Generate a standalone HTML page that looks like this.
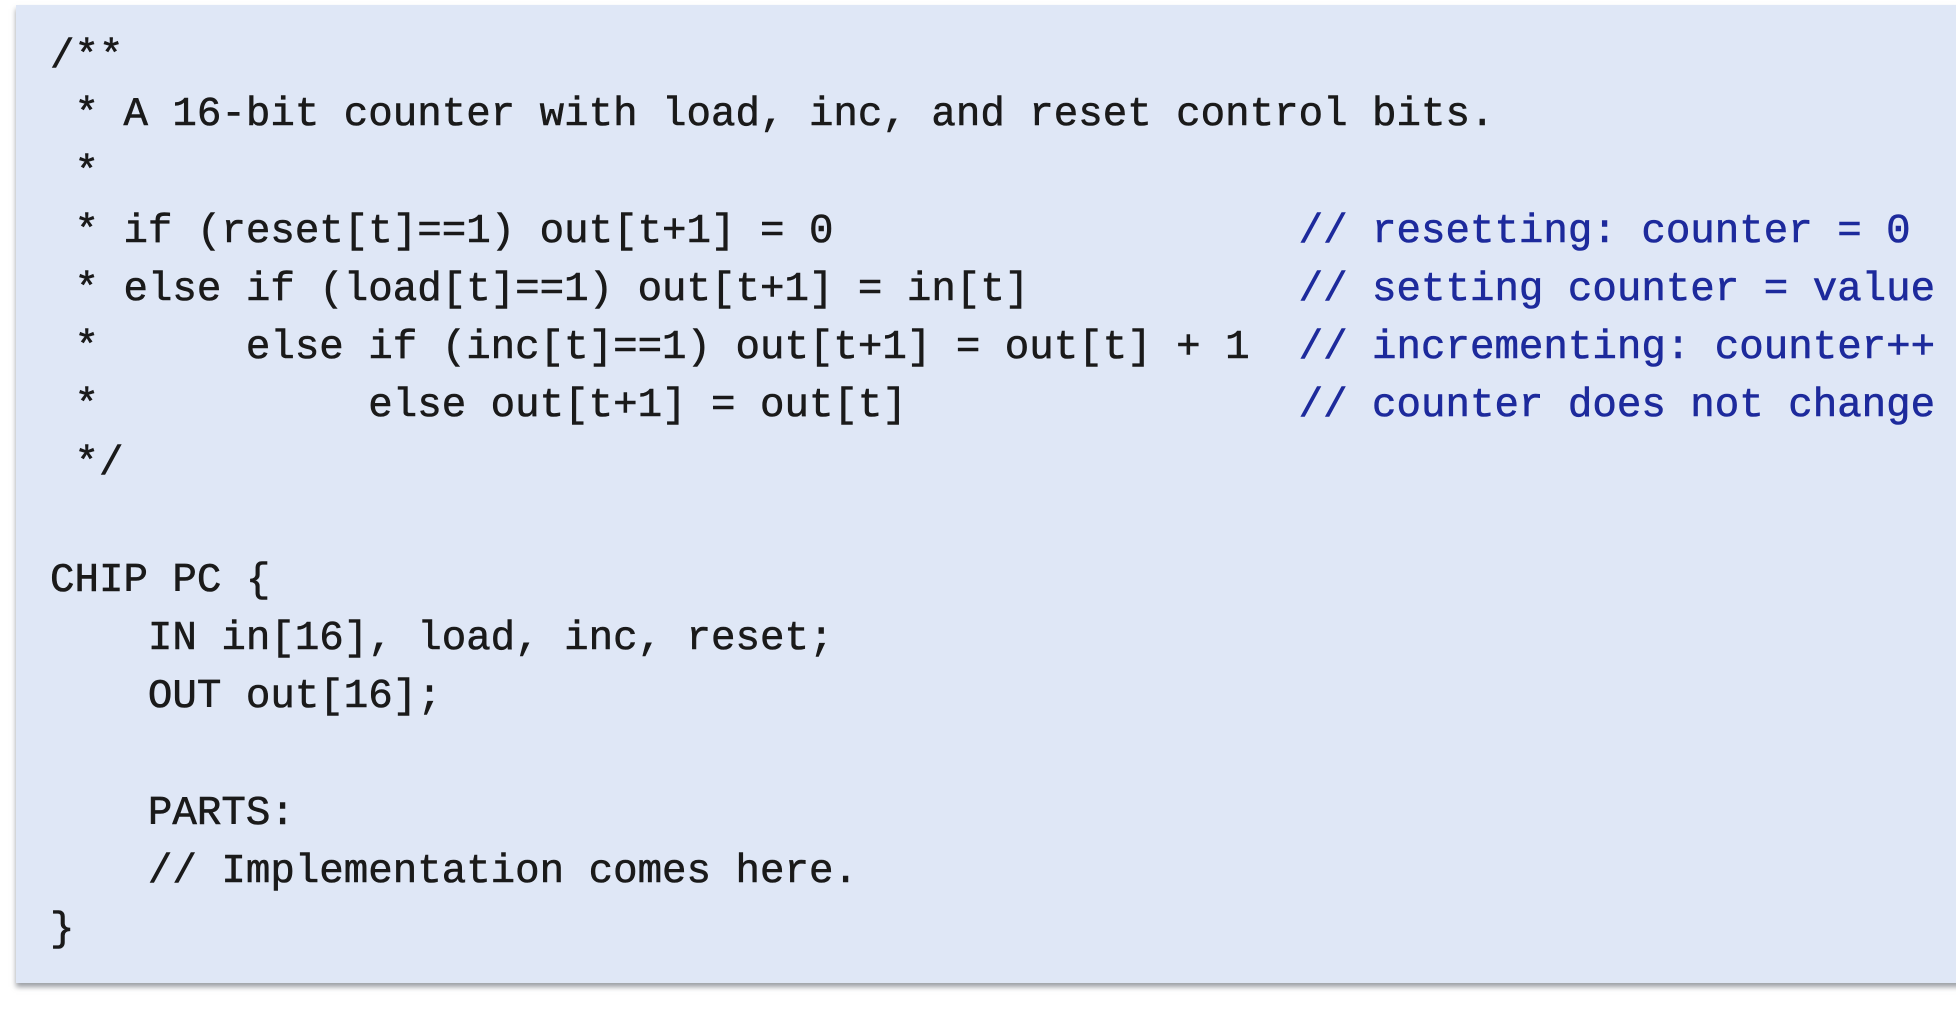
<!DOCTYPE html>
<html><head><style>
html,body{margin:0;padding:0;background:#fff;width:1956px;height:1018px;overflow:hidden}
.box{position:absolute;left:16px;top:5px;width:1960px;height:978px;background:#dfe7f6;box-shadow:0 4px 5px rgba(90,95,105,0.6)}
pre{position:absolute;left:50px;top:28px;margin:0;font-family:"Liberation Mono",monospace;font-size:40.8px;line-height:58.2px;color:#1a1a1a;white-space:pre;-webkit-text-stroke:0.6px #1a1a1a}
.c{color:#1d2a9c;-webkit-text-stroke:0.6px #1d2a9c}
</style></head><body>
<div class="box"></div>
<pre>/**
 * A 16-bit counter with load, inc, and reset control bits.
 *
 * if (reset[t]==1) out[t+1] = 0                   <span class="c">// resetting: counter = 0</span>
 * else if (load[t]==1) out[t+1] = in[t]           <span class="c">// setting counter = value</span>
 *      else if (inc[t]==1) out[t+1] = out[t] + 1  <span class="c">// incrementing: counter++</span>
 *           else out[t+1] = out[t]                <span class="c">// counter does not change</span>
 */

CHIP PC {
    IN in[16], load, inc, reset;
    OUT out[16];

    PARTS:
    // Implementation comes here.
}</pre>
</body></html>
